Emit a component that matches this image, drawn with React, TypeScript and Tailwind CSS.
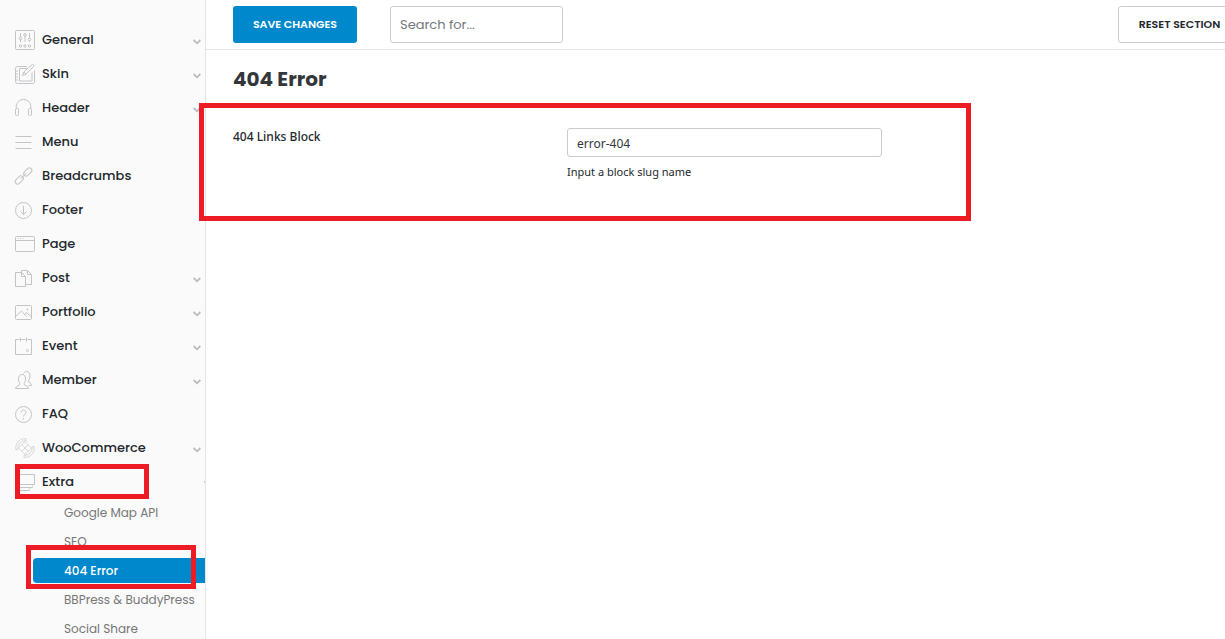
import { useState } from 'react';
import type { ReactNode } from 'react';
import { clsx } from 'clsx';

type MenuItem = {
  label: string;
  icon: ReactNode;
  expandable?: boolean;
};

const menu: MenuItem[] = [
  {
    label: 'General',
    expandable: true,
    icon: (
      <>
        <rect x="0.5" y="0.5" width="19" height="19" rx="1" />
        <path d="M5.5 3v9M10 3v9M14.5 3v9" />
        <circle cx="5.5" cy="8.5" r="1.3" fill="#fafafa" />
        <circle cx="10" cy="5" r="1.3" fill="#fafafa" />
        <circle cx="14.5" cy="9.5" r="1.3" fill="#fafafa" />
        <circle cx="5.5" cy="16" r="1.2" />
        <circle cx="10" cy="16" r="1.2" />
        <circle cx="14.5" cy="16" r="1.2" />
      </>
    ),
  },
  {
    label: 'Skin',
    expandable: true,
    icon: (
      <>
        <path d="M12 2.5H2.5a2 2 0 0 0-2 2v13a2 2 0 0 0 2 2h15a2 2 0 0 0 2-2V6.5" />
        <path d="M12 4.5H4.500v12.500h12.500V8.500M1 7h2M1 10h2M1 13h2M1 16h2" />
        <path d="M7.500 11.500l1.300-3.500 8-7.200q.8-.6 1.600.1.800.9.100 1.700l-7.500 7.500zM9 8l2 2.100" />
      </>
    ),
  },
  {
    label: 'Header',
    expandable: true,
    icon: (
      <>
        <path d="M1.500 11C0 5.500 4 1.500 8.500 1.500s8.500 4 7 9.500" />
        <rect x="0.5" y="10.5" width="3" height="7" rx="1" />
        <rect x="13.5" y="10.5" width="3" height="7" rx="1" />
      </>
    ),
  },
  {
    label: 'Menu',
    icon: <path d="M.5 4.500h16M.5 10.500h16M.5 16.500h16" strokeWidth="1.2" />,
  },
  {
    label: 'Breadcrumbs',
    icon: (
      <>
        <rect x="8" y="3.5" width="9.5" height="5" rx="2.5" transform="rotate(-45 12.75 6)" />
        <rect x="-0.5" y="11.5" width="9.5" height="5" rx="2.5" transform="rotate(-45 4.25 14)" />
        <path d="M5.500 13l6-6" />
      </>
    ),
  },
  {
    label: 'Footer',
    icon: (
      <>
        <circle cx="8.5" cy="10.5" r="8" />
        <path d="M8.500 6v8.500M5.500 11.500l3 3 3-3" />
      </>
    ),
  },
  {
    label: 'Page',
    icon: (
      <>
        <rect x="0.5" y="2.5" width="19" height="15" rx="1" />
        <path d="M.5 6.500h19" />
        <path d="M2.500 4.500h1M5 4.500h1M7.500 4.500h1" />
      </>
    ),
  },
  {
    label: 'Post',
    expandable: true,
    icon: (
      <>
        <path d="M.5 4.500h6l4 4v10H.5z" />
        <path d="M6.500 4.500v4h4" />
        <path d="M6.500 4.500v-2h6l4 4v10h-6" />
        <path d="M12.500 2.500v4h4" />
      </>
    ),
  },
  {
    label: 'Portfolio',
    expandable: true,
    icon: (
      <>
        <rect x="0.5" y="3.5" width="16" height="14" rx="1" />
        <path d="M1 14l5.500-5 5 5.500M9.500 12.500l2-2 5 4.500" />
        <circle cx="12.5" cy="7.5" r="0.6" />
      </>
    ),
  },
  {
    label: 'Event',
    expandable: true,
    icon: (
      <>
        <path d="M4.500 3.500h-4v15h16v-15h-4M6.500 3.500h4M5.500 1.500v4M11.500 1.500v4" />
        <path d="M11.500 13.500h2v2h-2z" opacity="0.6" />
      </>
    ),
  },
  {
    label: 'Member',
    expandable: true,
    icon: (
      <>
        <path d="M.5 18.500c0-3 4.500-2.500 4.500-4.500 0-1-1.500-2-1.500-5 0-2.500 1-4.500 3.500-4.500s3.500 2 3.500 4.500c0 3-1.500 4-1.500 5 0 2 4.500 1.500 4.500 4.500z" />
        <path d="M8.500 3.500c.8-1.200 1.800-2 3-2 2.500 0 3.500 2 3.500 4.500 0 3-1.500 4-1.500 5 0 2 3 1.500 3 4.500h-3" />
      </>
    ),
  },
  {
    label: 'FAQ',
    icon: (
      <>
        <circle cx="8.5" cy="10.5" r="8" />
        <path d="M6 8.500c0-3.500 5.200-3.200 5 0-.1 1.800-2.500 2-2.500 4M8.500 14v1.300" />
      </>
    ),
  },
  {
    label: 'WooCommerce',
    expandable: true,
    icon: (
      <g opacity="0.8">
        <path
          d="M10 3.500l6.500 6.500-6.500 6.500L3.500 10zM6.750 6.750l6.500 6.500M13.250 6.750l-6.500 6.500"
          strokeWidth="0.8"
        />
        <path d="M1 12a9.300 9.300 0 0 1 10-11.300M3 11a7.200 7.200 0 0 1 8-8.200M1 12l2-1M11 .7v2.100" strokeWidth="0.8" />
        <path d="M19 8a9.300 9.300 0 0 1-10 11.300M17 9a7.200 7.200 0 0 1-8 8.200M19 8l-2 1M9 19.300v-2.100" strokeWidth="0.8" />
      </g>
    ),
  },
];

const extraItems = ['Google Map API', 'SEO', '404 Error', 'BBPress & BuddyPress', 'Social Share'];

function MenuIcon({ children }: { children: ReactNode }) {
  return (
    <svg
      viewBox="0 0 20 20"
      className="w-5 h-5 shrink-0"
      fill="none"
      stroke="#c3c4c7"
      strokeWidth="1"
      overflow="visible"
      aria-hidden="true"
    >
      {children}
    </svg>
  );
}

function Chevron() {
  return (
    <svg viewBox="0 0 8 6" className="ml-auto mt-[3px] w-2 h-1.5" fill="none" stroke="#b9bbbe" strokeWidth="1.8" aria-hidden="true">
      <path d="M.7 1L4 4.300 7.300 1" />
    </svg>
  );
}

// Red rectangle that points out a part of the screen
function Highlight({ className }: { className: string }) {
  return <div className={clsx('absolute z-10 border-5 border-[#ed1c24] pointer-events-none', className)} />;
}

function Sidebar() {
  const [active, setActive] = useState('404 Error');

  return (
    <nav className="w-[206px] shrink-0 border-r border-[#e2e4e7] bg-[#fafafa] pt-[23px] text-[13px]">
      <ul>
        {menu.map((item) => (
          <li key={item.label}>
            <a href="#" className="flex h-[34px] items-center gap-[7px] pl-[15px] pr-1 font-medium text-[#23282d]">
              <MenuIcon>{item.icon}</MenuIcon>
              {item.label}
              {item.expandable && <Chevron />}
            </a>
          </li>
        ))}
        <li>
          <div className="relative">
            <a href="#" className="flex h-[34px] items-center gap-[7px] pl-[15px] font-medium text-[#23282d]">
              <MenuIcon>
                <path d="M4.500 2.500h15v10H4.500M3 15.500h14.500M2 18.500h12.500" />
                <path d="M17.500 13v2.500M14.500 16v2.500" opacity="0.5" />
              </MenuIcon>
              Extra
              <span className="ml-auto w-px h-0.5 bg-[#dfc9b8]" />
            </a>
            <Highlight className="left-[15px] -top-px w-[134px] h-[35px]" />
          </div>
          <ul className="-mt-px text-xs">
            {extraItems.map((label) => (
              <li key={label} className="relative flex h-[29px] items-center pl-[33px]">
                <a
                  href="#"
                  onClick={() => setActive(label)}
                  className={clsx(
                    'flex h-[25px] grow items-center rounded-l-sm pl-[31px]',
                    label === active ? 'bg-[#0088cc] font-medium text-white' : 'text-[#777777]'
                  )}
                >
                  {label}
                </a>
                {label === '404 Error' && <Highlight className="left-[26px] -top-[11px] w-[170px] h-11" />}
              </li>
            ))}
          </ul>
        </li>
      </ul>
    </nav>
  );
}

export default function App() {
  const [slug, setSlug] = useState('error-404');
  const [query, setQuery] = useState('');

  return (
    <div className="flex h-screen overflow-hidden bg-white font-['Poppins',Inter,sans-serif] text-[#23282d]">
      <Sidebar />
      <main className="min-w-0 grow">
        {/* The reset button runs past the right edge of the window */}
        <header className="-mr-4 flex h-[50px] items-center border-b border-[#e2e4e7] pl-[27px]">
          <button className="h-[37px] w-[124px] rounded-[3px] bg-[#0088cc] text-[11px] font-semibold text-white">
            SAVE CHANGES
          </button>
          <input
            type="search"
            aria-label="Search"
            placeholder="Search for..."
            value={query}
            onChange={(e) => setQuery(e.target.value)}
            className="ml-[33px] h-[37px] w-[173px] rounded-[3px] border border-[#cccccc] px-[9px] text-[13px] placeholder:text-[#72777c]"
          />
          <button className="ml-auto h-[37px] w-[123px] shrink-0 rounded-[3px] border border-[#cccccc] text-[11px] font-semibold">
            RESET SECTION
          </button>
        </header>

        <h1 className="px-[27px] pt-[14px] pb-[9px] text-xl leading-[30px] font-bold text-[#32373c]">404 Error</h1>

        <section className="relative flex h-[118px] pl-[27px] pt-[25px] font-['Noto_Sans',sans-serif]">
          <label htmlFor="links-block" className="w-[334px] shrink-0 text-xs leading-[18px] font-medium">
            404 Links Block
          </label>
          <div>
            <input
              id="links-block"
              type="text"
              value={slug}
              onChange={(e) => setSlug(e.target.value)}
              className="block h-[29px] w-[315px] rounded-[3px] border border-[#cccccc] px-[9px] pt-0.5 text-xs text-[#32373c]"
            />
            <p className="mt-[6px] text-[11px] leading-[18px]">Input a block slug name</p>
          </div>
          <Highlight className="-left-[7px] top-0 w-[772px] h-full" />
        </section>
      </main>
    </div>
  );
}
